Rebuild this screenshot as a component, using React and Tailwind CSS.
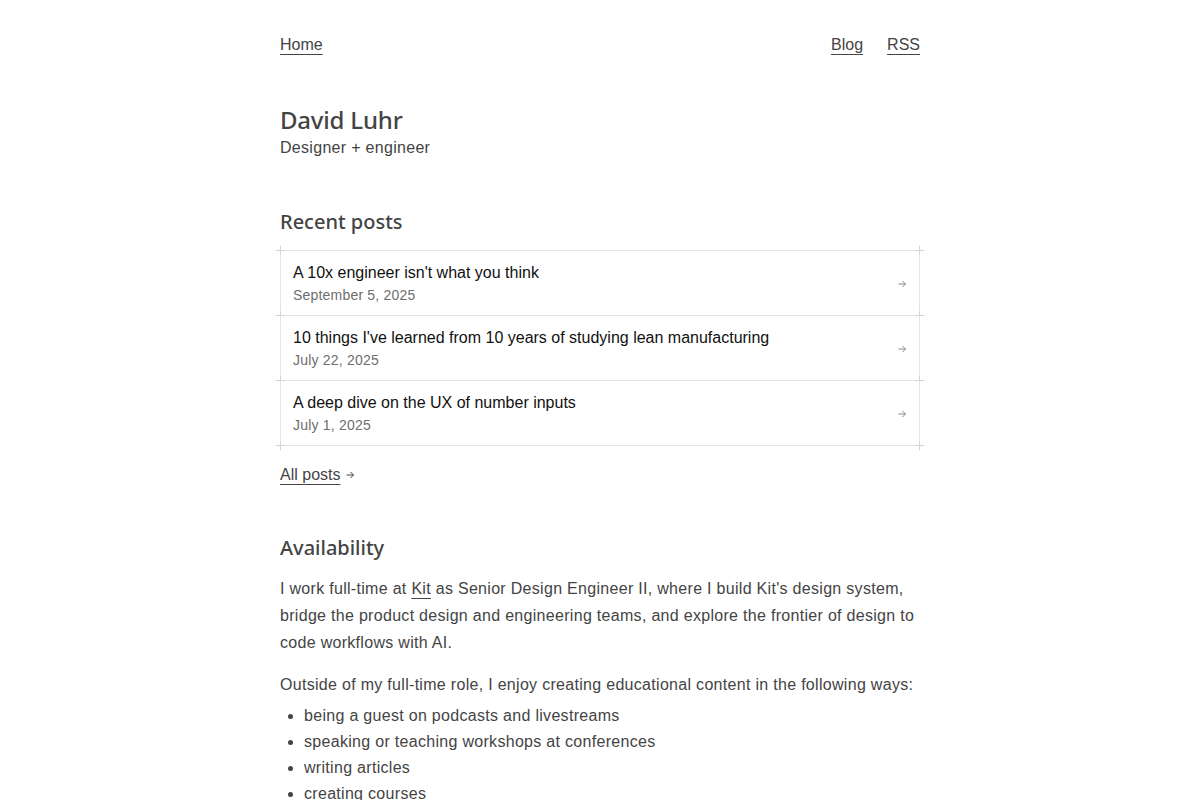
import React from "react";

const posts = [
  { title: "A 10x engineer isn't what you think", date: "September 5, 2025" },
  {
    title: "10 things I've learned from 10 years of studying lean manufacturing",
    date: "July 22, 2025",
  },
  { title: "A deep dive on the UX of number inputs", date: "July 1, 2025" },
];

const ways = [
  "being a guest on podcasts and livestreams",
  "speaking or teaching workshops at conferences",
  "writing articles",
  "creating courses",
];

const Arrow = ({ className = "" }) => (
  <svg viewBox="0 0 10 10" className={className} fill="none" stroke="currentColor" strokeWidth="1">
    <path d="M1.5 5h7M5.5 2l3 3-3 3" />
  </svg>
);

// little "+" marks that sit on the corners of each row
const Tick = ({ className }) => (
  <span className={`absolute w-[9px] h-[9px] pointer-events-none ${className}`}>
    <span className="absolute left-0 top-[4px] w-[9px] h-px bg-[#d4d4d4]" />
    <span className="absolute top-0 left-[4px] h-[9px] w-px bg-[#d4d4d4]" />
  </span>
);

const PostRow = ({ post, first }) => (
  <li className={`relative border-x border-b border-[#e5e5e5] ${first ? "border-t" : ""}`}>
    {first && <Tick className="-left-[5px] -top-[5px]" />}
    {first && <Tick className="-right-[5px] -top-[5px]" />}
    <Tick className="-left-[5px] -bottom-[5px]" />
    <Tick className="-right-[5px] -bottom-[5px]" />
    <a href="#" className="flex items-center justify-between px-3 pt-[11px] pb-[9px]">
      <div>
        <div className="text-[16px] leading-[22px] text-[#111]">{post.title}</div>
        <div className="text-[14px] leading-[22px] text-[#6e6e6e] tracking-[0.2px]">{post.date}</div>
      </div>
      <Arrow className="w-[10px] h-[10px] text-[#888]" />
    </a>
  </li>
);

export default function App() {
  return (
    <div className="min-h-screen bg-white font-['Liberation_Sans',Arial,sans-serif] text-[#444]">
      <div className="w-[640px] mx-auto">
        <nav className="flex justify-between pt-[35px] text-[16px] leading-[20px]">
          <a href="#" className="underline underline-offset-[4px]">Home</a>
          <div className="flex gap-6">
            <a href="#" className="underline underline-offset-[4px]">Blog</a>
            <a href="#" className="underline underline-offset-[4px]">RSS</a>
          </div>
        </nav>

        <header className="mt-[49px]">
          <h1 className="font-['Noto_Sans',sans-serif] text-[24px] leading-[32px] font-medium text-[#444] tracking-[-0.2px]">
            David Luhr
          </h1>
          <p className="mt-px text-[16px] leading-[22px] tracking-[0.3px]">Designer + engineer</p>
        </header>

        <section className="mt-[49px]">
          <h2 className="font-['Noto_Sans',sans-serif] text-[20px] leading-[28px] font-medium text-[#444]">
            Recent posts
          </h2>
          <ul className="mt-[14px]">
            {posts.map((p, i) => (
              <PostRow key={p.title} post={p} first={i === 0} />
            ))}
          </ul>
          <a href="#" className="inline-flex items-center gap-[5px] mt-[19px] text-[16px] leading-[20px]">
            <span className="underline underline-offset-[4px]">All posts</span>
            <Arrow className="w-[10px] h-[10px] text-[#444]" />
          </a>
        </section>

        <section className="mt-[47px]">
          <h2 className="font-['Noto_Sans',sans-serif] text-[20px] leading-[28px] font-medium text-[#444]">
            Availability
          </h2>
          <p className="mt-[13px] text-[16px] leading-[27px] tracking-[0.3px]">
            I work full-time at{" "}
            <a href="#" className="underline underline-offset-[4px]">Kit</a> as Senior Design
            Engineer II, where I build Kit's design system, bridge the product design and
            engineering teams, and explore the frontier of design to code workflows with AI.
          </p>
          <p className="mt-[15px] text-[16px] leading-[27px] tracking-[0.3px]">
            Outside of my full-time role, I enjoy creating educational content in the following ways:
          </p>
          <ul className="mt-[5px] list-disc pl-6 text-[16px] leading-[26px] tracking-[0.3px]">
            {ways.map((w) => (
              <li key={w}>{w}</li>
            ))}
          </ul>
        </section>
      </div>
    </div>
  );
}
